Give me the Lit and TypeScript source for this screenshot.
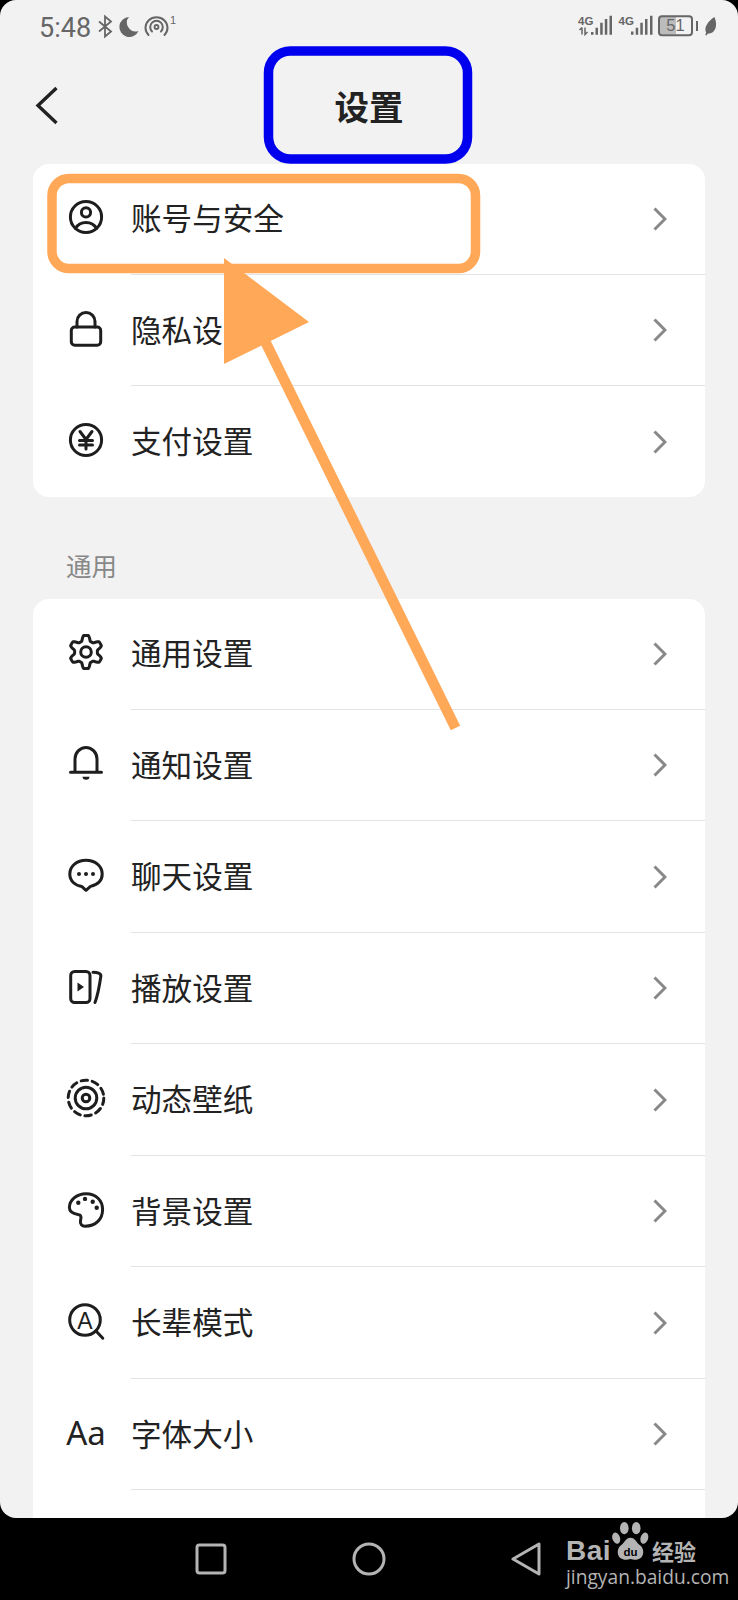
import { LitElement, html, css, svg } from "lit";
import { customElement } from "lit/decorators.js";

// rounded six tooth outline, teeth pointing up and down
const gearPath = (() => {
  const pts: string[] = [];
  for (let deg = 0; deg < 360; deg += 4) {
    const a = (deg * Math.PI) / 180;
    const wave = Math.cos(6 * a);
    const r = 14 + 2.6 * Math.max(-1, Math.min(1, wave * 1.6));
    pts.push(`${(18 + r * Math.sin(a)).toFixed(2)} ${(18 - r * Math.cos(a)).toFixed(2)}`);
  }
  return `M${pts.join("L")}Z`;
})();

const icons = {
  user: svg`<circle cx="18" cy="18" r="15.6" /><circle cx="18" cy="13.4" r="4.6" />
    <path d="M7.5 29.5C10 25 14 23.6 18 23.6s8 1.4 10.500 5.900" />`,
  lock: svg`<rect x="3.300" y="16" width="29.400" height="18.300" rx="3.500" />
    <path d="M9 16v-5.500a9 9 0 0 1 18 0V16" />`,
  yen: svg`<circle cx="18" cy="18" r="15.600" />
    <path d="M12 9.500l6 8 6-8M18 17.500V27M11.500 18.500h13M11.500 23h13" />`,
  gear: svg`<path d=${gearPath} /><circle cx="18" cy="18" r="5.300" />`,
  bell: svg`<path d="M2.500 26.300h31M7 26V13a11 11.500 0 0 1 22 0v13" />
    <path class="fill" d="M14.500 30.800h7a3.500 3 0 0 1-7 0z" />`,
  chat: svg`<path d="M18 33.300l-4.300-3.900C7 28.500 1.800 24 1.800 17 1.800 9 9 3.300 18 3.300S34.200 9 34.200 17c0 7-4.700 10.700-11.700 12.400z" />
    <circle class="fill" cx="11" cy="17" r="2" /><circle class="fill" cx="18" cy="17" r="2" /><circle class="fill" cx="25" cy="17" r="2" />`,
  play: svg`<rect x="2.700" y="2.400" width="19.300" height="31.200" rx="4" />
    <path class="fill" d="M9.500 13.500l6.500 4.500-6.500 4.500z" />
    <path d="M25 3.200c4 0 8.500.800 7.800 4.300-.800 5.500-3.300 19.500-5.800 26" />`,
  wallpaper: svg`<circle class="dash" cx="18" cy="18" r="17.800" /><circle cx="18" cy="18" r="10.800" /><circle cx="18" cy="18" r="3.800" />`,
  palette: svg`<path d="M18 1.700C8.500 1.700 1.400 8.500 1.400 15.500c0 5.500 5.600 6.500 8.600 7 4 .500 3 4 2.500 6-.700 3.500 1.500 5.700 4.500 5.700C28 34.200 34.600 27 34.600 17.500 34.600 8.500 28 1.700 18 1.700z" />
    <circle class="fill" cx="10.300" cy="10.700" r="2.200" /><circle class="fill" cx="17" cy="6.900" r="2.200" />
    <circle class="fill" cx="24.700" cy="9.700" r="2.200" /><circle class="fill" cx="28.700" cy="15.700" r="2.200" />`,
  elder: svg`<circle cx="17" cy="17" r="15.300" /><path d="M27.800 27.800l7 7.400" />
    <text class="glyph" x="17" y="25.500" text-anchor="middle">A</text>`,
};

type IconName = keyof typeof icons;

interface MenuItem {
  label: string;
  icon?: IconName;
  text?: string;
}

const accountItems: MenuItem[] = [
  { label: "账号与安全", icon: "user" },
  { label: "隐私设置", icon: "lock" },
  { label: "支付设置", icon: "yen" },
];

const generalItems: MenuItem[] = [
  { label: "通用设置", icon: "gear" },
  { label: "通知设置", icon: "bell" },
  { label: "聊天设置", icon: "chat" },
  { label: "播放设置", icon: "play" },
  { label: "动态壁纸", icon: "wallpaper" },
  { label: "背景设置", icon: "palette" },
  { label: "长辈模式", icon: "elder" },
  { label: "字体大小", text: "Aa" },
  { label: "" },
];

@customElement("app-root")
export class AppRoot extends LitElement {
  static styles = css`
    :host {
      display: block;
      position: relative;
      width: 738px;
      height: 1600px;
      overflow: hidden;
      background: #000;
      font-family: "Noto Sans CJK SC", "Noto Sans", sans-serif;
    }

    .screen {
      height: 1518px;
      overflow: hidden;
      background: #f2f2f2;
      border-radius: 16px;
    }

    .status {
      display: flex;
      justify-content: space-between;
      align-items: center;
      height: 50px;
      padding: 5px 18px 0 39px;
      box-sizing: border-box;
    }

    .status-left {
      display: flex;
      align-items: center;
      gap: 6px;
    }

    .time {
      width: 51px;
      font-family: Roboto, sans-serif;
      font-size: 27px;
      line-height: 30px;
      color: #666;
    }

    .status svg {
      display: block;
      margin-bottom: 5px;
    }

    .status text {
      fill: #666;
      font-family: "Liberation Sans", sans-serif;
    }

    .header {
      display: grid;
      grid-template-columns: 1fr auto 1fr;
      align-items: center;
      height: 110px;
      margin-bottom: 4px;
      padding-left: 34px;
    }

    .back {
      display: block;
    }

    .title {
      margin-right: 34px;
      font-size: 34.500px;
      font-weight: 700;
      line-height: 40px;
      color: #222;
    }

    .card {
      margin: 0 33px;
      overflow: hidden;
      background: #fff;
      border-radius: 16px;
    }

    .row {
      display: flex;
      height: 111.500px;
    }

    .card .row:last-child {
      height: 110px;
    }

    .row:last-child .row-body {
      border-bottom: none;
    }

    .icon {
      display: flex;
      flex: none;
      justify-content: center;
      align-items: center;
      width: 36px;
      height: 36px;
      margin: 35px 27px 0 35px;
    }

    .icon svg {
      display: block;
      overflow: visible;
      fill: none;
      stroke: #1e1e1e;
      stroke-width: 3;
      stroke-linecap: round;
      stroke-linejoin: round;
    }

    .icon .fill {
      fill: #1e1e1e;
      stroke: none;
    }

    .icon .dash {
      stroke-width: 3;
      stroke-dasharray: 6.500 4.700;
    }

    .icon .glyph {
      fill: #1e1e1e;
      stroke: none;
      font-family: "Liberation Sans", sans-serif;
      font-size: 23px;
    }

    .icon-text {
      font-family: "Noto Sans", sans-serif;
      font-size: 33px;
      line-height: 36px;
      color: #222;
      white-space: nowrap;
    }

    .row-body {
      display: flex;
      flex: 1;
      justify-content: space-between;
      align-items: center;
      box-sizing: border-box;
      margin-bottom: 1px;
      padding-right: 38px;
      border-bottom: 1px solid #e3e3e3;
    }

    .label {
      padding-bottom: 3px;
      font-size: 30.600px;
      line-height: 40px;
      color: #222;
    }

    .chevron {
      display: block;
      fill: none;
      stroke: #888;
      stroke-width: 3;
    }

    .section {
      display: flex;
      align-items: flex-end;
      box-sizing: border-box;
      height: 102px;
      padding: 0 0 21px 66px;
      font-size: 25.500px;
      line-height: 26px;
      color: #888;
    }

    .nav {
      display: flex;
      justify-content: center;
      align-items: center;
      gap: 125px;
      height: 82px;
      padding-right: 2px;
    }

    .nav svg {
      display: block;
      fill: none;
      stroke: #b4b4b4;
      stroke-width: 3;
      stroke-linejoin: round;
    }

    .overlay {
      position: absolute;
      top: 0;
      left: 0;
      pointer-events: none;
    }

    .watermark {
      position: absolute;
      top: 1521px;
      left: 566px;
      width: 134px;
      color: #b4b4b4;
    }

    .mark-row {
      display: flex;
      align-items: flex-end;
      height: 42px;
    }

    .bai {
      width: 45px;
      margin-bottom: -3px;
      font-family: "Liberation Sans", sans-serif;
      font-size: 28px;
      font-weight: 700;
      line-height: 30px;
      letter-spacing: 0.500px;
    }

    .paw {
      display: block;
      flex: none;
    }

    .paw text {
      fill: #000;
      font-family: "Liberation Sans", sans-serif;
      font-size: 12px;
      font-weight: 700;
    }

    .jy {
      margin-left: 2px;
      font-size: 22px;
      font-weight: 700;
      line-height: 26px;
      white-space: nowrap;
    }

    .site {
      margin-top: 2px;
      font-family: "Open Sans", sans-serif;
      font-size: 19.200px;
      line-height: 24px;
      white-space: nowrap;
    }
  `;

  private renderRow(item: MenuItem) {
    return html`
      <div class="row">
        <div class="icon">
          ${item.icon
            ? html`<svg width="36" height="36" viewBox="0 0 36 36">${icons[item.icon]}</svg>`
            : html`<span class="icon-text">${item.text ?? ""}</span>`}
        </div>
        <div class="row-body">
          <span class="label">${item.label}</span>
          ${item.label
            ? html`<svg class="chevron" width="14" height="24" viewBox="0 0 14 24">
                <path d="M1.500 1.500L12 12 1.500 22.500" />
              </svg>`
            : ""}
        </div>
      </div>
    `;
  }

  private renderStatus() {
    return html`
      <div class="status">
        <div class="status-left">
          <span class="time">5:48</span>
          <svg width="84" height="30" viewBox="0 0 84 30">
            <path d="M3 11.500L15 21.500 9 26.500V6.500l6 5L3 21.500" fill="none" stroke="#666" stroke-width="1.800" />
            <path d="M33 7a10 10 0 1 0 9.500 14A8.800 8.800 0 0 1 33 7z" fill="#666" />
            <path d="M52.500 25a11 10.500 0 1 1 16 0M56 21.500a6.300 6.300 0 1 1 9 0" fill="none" stroke="#666" stroke-width="2" stroke-linecap="round" />
            <circle cx="60.500" cy="17" r="2" fill="none" stroke="#666" stroke-width="1.800" />
            <text x="74" y="14" font-size="11">1</text>
          </svg>
        </div>
        <svg width="145" height="30" viewBox="0 0 145 30">
          <text x="3" y="15" font-size="11.500" font-weight="700">4G</text>
          <path d="M7 17.500v7M4.500 20l2.500-2.500M10 17.500v7l2.500-2.500" fill="none" stroke="#666" stroke-width="1.500" />
          <path d="M16 22h2.500v2.700H16zM20.500 17.700H23v7h-2.500zM25.200 12.700h2.500v12h-2.500zM29.800 9h2.500v15.700h-2.500zM34.500 5.700H37v19h-2.500z" fill="#666" />
          <text x="43.500" y="15" font-size="11.500" font-weight="700">4G</text>
          <path d="M56 21.500h2.500v3.200H56zM60.700 17.700h2.500v7h-2.500zM65.300 12.700h2.500v12h-2.500zM70 9h2.500v15.700H70zM75 5.700h2.500v19H75z" fill="#666" />
          <rect x="85" y="6.300" width="16" height="18" fill="#bcbcbc" />
          <rect x="84" y="6.300" width="33" height="19" rx="3" fill="none" stroke="#666" stroke-width="2" />
          <text x="100.500" y="21" text-anchor="middle" font-size="16.500">51</text>
          <rect x="121" y="11" width="2" height="10" fill="#666" />
          <path d="M139.500 7c2 5 2.500 11-1 14.500-1.500 1.500-3.500 2-5 2-.800 0-1.500 1-2 2l-1.200-.500.800-2.500c-2.500-5 2-11.500 8.400-15.500z" fill="#666" />
        </svg>
      </div>
    `;
  }

  private renderAnnotations() {
    return html`
      <svg class="overlay" width="738" height="1600" viewBox="0 0 738 1600">
        <rect x="268.500" y="51" width="199" height="108" rx="22" fill="none" stroke="#0000ee" stroke-width="9.500" />
        <rect x="52" y="178.500" width="423.500" height="90" rx="17" fill="none" stroke="#ffa858" stroke-width="9.500" />
        <path d="M262 335L455.500 728" fill="none" stroke="#ffa858" stroke-width="10.500" />
        <path d="M224 258L309 322 224 364z" fill="#ffa858" />
      </svg>
    `;
  }

  private renderWatermark() {
    return html`
      <div class="watermark">
        <div class="mark-row">
          <span class="bai">Bai</span>
          <svg class="paw" width="39" height="42" viewBox="0 0 39 44" fill="#b4b4b4">
            <ellipse cx="13" cy="7.500" rx="4.500" ry="6.500" />
            <ellipse cx="25.500" cy="7.500" rx="4.500" ry="6.500" />
            <ellipse cx="4.500" cy="18" rx="4" ry="6" transform="rotate(-18 4.500 18)" />
            <ellipse cx="34" cy="18" rx="4" ry="6" transform="rotate(18 34 18)" />
            <path d="M19.500 17.500c5 0 6 5 10 8 5 3.500 5 14-3.500 15-3 .300-4.500-.800-6.500-.800s-3.500 1.100-6.500.800c-8.500-1-8.500-11.500-3.500-15 4-3 5-8 10-8z" />
            <text x="19.500" y="37" text-anchor="middle">du</text>
          </svg>
          <span class="jy">经验</span>
        </div>
        <div class="site">jingyan.baidu.com</div>
      </div>
    `;
  }

  render() {
    return html`
      <div class="screen">
        ${this.renderStatus()}
        <div class="header">
          <svg class="back" width="24" height="40" viewBox="0 0 24 40">
            <path d="M22.500 3L4 20.500 22.500 38" fill="none" stroke="#222" stroke-width="3.400" />
          </svg>
          <span class="title">设置</span>
          <span></span>
        </div>
        <div class="card">${accountItems.map((i) => this.renderRow(i))}</div>
        <div class="section">通用</div>
        <div class="card">${generalItems.map((i) => this.renderRow(i))}</div>
      </div>
      <div class="nav">
        <svg width="32" height="32" viewBox="0 0 32 32"><rect x="2" y="2" width="28" height="28" rx="2.500" /></svg>
        <svg width="34" height="34" viewBox="0 0 34 34"><circle cx="17" cy="17" r="15" /></svg>
        <svg width="30" height="34" viewBox="0 0 30 34"><path d="M2 17L28 2v30z" /></svg>
      </div>
      ${this.renderAnnotations()} ${this.renderWatermark()}
    `;
  }
}
